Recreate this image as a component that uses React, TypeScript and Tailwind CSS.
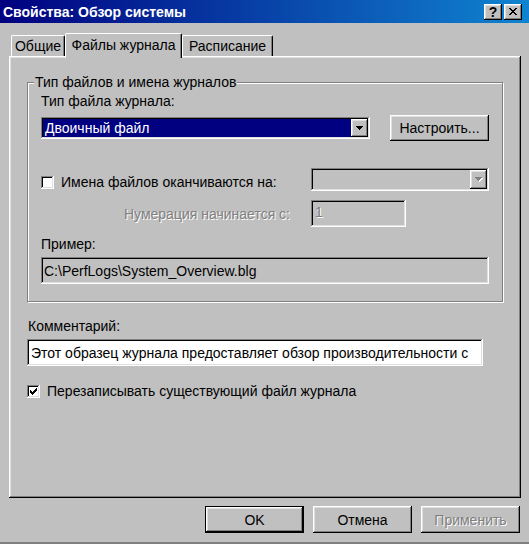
import React from 'react';

const raised =
  'shadow-[inset_-1px_-1px_#000,inset_1px_1px_#fff,inset_-2px_-2px_#808080,inset_2px_2px_#dfdfdf]';
const sunken =
  'shadow-[inset_-1px_-1px_#fff,inset_1px_1px_#808080,inset_-2px_-2px_#dfdfdf,inset_2px_2px_#000]';
const disabledText = 'text-[#808080] [text-shadow:1px_1px_0_#fff]';

function Pixels({ rows, w, h, color }: { rows: number[][]; w: number; h: number; color: string }) {
  return (
    <svg width={w} height={h} viewBox={`0 0 ${w} ${h}`} shapeRendering="crispEdges">
      {rows.map(([x, y, len], i) => (
        <rect key={i} x={x} y={y} width={len} height={1} fill={color} />
      ))}
    </svg>
  );
}

const arrowRows = [
  [0, 0, 7],
  [1, 1, 5],
  [2, 2, 3],
  [3, 3, 1],
];

function Arrow({ disabled }: { disabled?: boolean }) {
  if (disabled) {
    return (
      <span className="relative block w-[8px] h-[5px]">
        <span className="absolute left-[1px] top-[1px]">
          <Pixels rows={arrowRows} w={7} h={4} color="#fff" />
        </span>
        <span className="absolute left-0 top-0">
          <Pixels rows={arrowRows} w={7} h={4} color="#808080" />
        </span>
      </span>
    );
  }
  return <Pixels rows={arrowRows} w={7} h={4} color="#000" />;
}

function Checkbox({ checked }: { checked?: boolean }) {
  return (
    <span className={`w-[13px] h-[13px] bg-white ${sunken} flex items-center justify-center shrink-0`}>
      {checked && (
        <Pixels
          w={7}
          h={7}
          color="#000"
          rows={[
            [6, 0, 1],
            [5, 1, 2],
            [0, 2, 1],
            [4, 2, 3],
            [0, 3, 2],
            [3, 3, 3],
            [0, 4, 5],
            [1, 5, 3],
            [2, 6, 1],
          ]}
        />
      )}
    </span>
  );
}

function Button({ label, primary, disabled, className = '' }: { label: string; primary?: boolean; disabled?: boolean; className?: string }) {
  return (
    <button
      className={`bg-[#c0c0c0] flex items-center justify-center ${raised} ${
        primary ? 'border border-black' : ''
      } ${disabled ? disabledText : 'text-black'} ${className}`}
    >
      {label}
    </button>
  );
}

function TitleBar() {
  return (
    <div className="h-[23px] shrink-0 flex items-center justify-between pl-[3px] pr-[7px] bg-[linear-gradient(to_right,#000080,#1084d0)]">
      <span className="text-white font-bold text-[14px] leading-none">Свойства: Обзор системы</span>
      <div className="flex gap-[2px]">
        <span className={`w-[18px] h-[16px] bg-[#c0c0c0] ${raised} flex items-center justify-center text-[14px] font-bold leading-none text-black`}>
          ?
        </span>
        <span className={`w-[18px] h-[16px] bg-[#c0c0c0] ${raised} flex items-center justify-center`}>
          <Pixels
            w={8}
            h={7}
            color="#000"
            rows={[
              [0, 0, 2],
              [6, 0, 2],
              [1, 1, 2],
              [5, 1, 2],
              [2, 2, 4],
              [3, 3, 2],
              [2, 4, 4],
              [1, 5, 2],
              [5, 5, 2],
              [0, 6, 2],
              [6, 6, 2],
            ]}
          />
        </span>
      </div>
    </div>
  );
}

function Tabs() {
  const tab = 'border-l border-t border-white rounded-tl-[2px] rounded-tr-[2px] shadow-[inset_-1px_0_#808080] border-r border-r-black flex items-center justify-center';
  return (
    <div className="relative z-10 h-[25px] -mb-[2px] pl-[2px] flex items-end">
      <div className={`${tab} w-[54px] h-[21px] mb-[2px]`}>Общие</div>
      <div className={`${tab} w-[117px] h-[25px] bg-[#c0c0c0] pb-[3px]`}>Файлы журнала</div>
      <div className={`${tab} w-[91px] h-[21px] mb-[2px]`}>Расписание</div>
    </div>
  );
}

export default function App() {
  return (
    <div className="w-[529px] h-[544px] bg-[#c0c0c0] flex flex-col border-b-2 border-b-[#808080] font-['Liberation_Sans',Arial,sans-serif] text-[14px] leading-[16px] text-black">
      <TitleBar />

      <div className="flex flex-col pl-[9px] pr-[8px] pt-[10px]">
        <Tabs />

        {/* Panel */}
        <div className={`h-[442px] ${raised} flex flex-col px-[18px] pt-[18px]`}>
          <fieldset className="border border-[#808080] shadow-[inset_1px_1px_#fff,1px_1px_#fff] px-[13px] pb-[17px] flex flex-col">
            <legend className="-ml-[7px] px-[1px] bg-[#c0c0c0] relative">Тип файлов и имена журналов</legend>

            <span className="mt-[3px]">Тип файла журнала:</span>

            <div className="mt-[6px] flex items-center justify-between h-[26px]">
              <div className={`w-[329px] h-[22px] bg-white ${sunken} flex items-center p-[2px]`}>
                <span className="flex-1 h-full bg-[#000080] text-white flex items-center pl-[2px]">Двоичный файл</span>
                <span className={`w-[17px] h-full bg-[#c0c0c0] ${raised} flex items-center justify-center`}>
                  <Arrow />
                </span>
              </div>
              <Button label="Настроить..." className="w-[99px] h-[26px]" />
            </div>

            <div className="mt-[27px] flex items-center h-[23px]">
              <div className="flex-1 flex items-center gap-[7px] mt-[5px]">
                <Checkbox />
                <span>Имена файлов оканчиваются на:</span>
              </div>
              <div className={`w-[178px] h-[23px] ${sunken} flex items-center justify-end p-[2px]`}>
                <span className={`w-[17px] h-full ${raised} flex items-center justify-center`}>
                  <Arrow disabled />
                </span>
              </div>
            </div>

            <div className="mt-[9px] flex items-center h-[27px]">
              <span className={`flex-1 text-right pr-[21px] ${disabledText}`}>Нумерация начинается с:</span>
              <div className={`w-[95px] h-[27px] mr-[83px] ${sunken} flex items-start pt-[4px] pl-[4px] ${disabledText}`}>1</div>
            </div>

            <span className="mt-[9px]">Пример:</span>
            <div className={`mt-[5px] h-[27px] ${sunken} flex items-center pl-[3px]`}>C:\PerfLogs\System_Overview.blg</div>
          </fieldset>

          <span className="mt-[16px] pl-[1px]">Комментарий:</span>
          <div className={`mt-[5px] w-[456px] h-[27px] bg-white ${sunken} flex items-center pl-[4px] whitespace-nowrap overflow-hidden`}>
            Этот образец журнала предоставляет обзор производительности с
          </div>

          <div className="mt-[17px] flex items-center gap-[7px]">
            <Checkbox checked />
            <span>Перезаписывать существующий файл журнала</span>
          </div>
        </div>
      </div>

      <div className="mt-[8px] flex justify-end gap-[9px] pr-[9px]">
        <Button label="OK" primary className="w-[99px] h-[27px]" />
        <Button label="Отмена" className="w-[99px] h-[27px]" />
        <Button label="Применить" disabled className="w-[99px] h-[27px]" />
      </div>
    </div>
  );
}
